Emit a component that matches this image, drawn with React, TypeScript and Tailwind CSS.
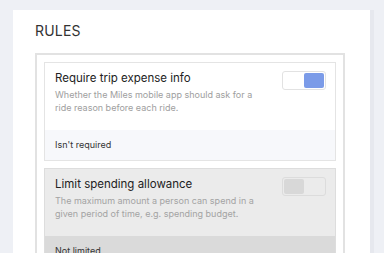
export default function App() {
  return (
    <div className="h-[253px] overflow-hidden bg-[#eef0f5] pl-[13px] pt-[10px] font-['Inter',sans-serif]">
      <div className="w-[357px] h-[300px] bg-white shadow-[4px_0_0_#e6e8ee] pl-[22px] pt-[12px]">
        <div className="text-[14px] leading-[18px] text-[#333] tracking-[0.2px]">RULES</div>
        <div className="mt-[13px] w-[310px] border-2 border-[#e2e2e2] p-[7px] flex flex-col gap-[7px]">
          <div className="border border-[#e4e4e4] bg-white">
            <div className="flex justify-between pl-[10px] pr-[9px] pt-[7px] pb-[16px]">
              <div>
                <div className="text-[11.5px] leading-[16px] text-[#222]">Require trip expense info</div>
                <div className="mt-[2px] w-[210px] text-[9px] leading-[13px] text-[#9e9e9e]">
                  Whether the Miles mobile app should ask for a ride reason before each ride.
                </div>
              </div>
              <div className="w-[44px] h-[19px] border border-[#e2e2e2] rounded-[3px] flex p-px mt-[1px]">
                <div className="flex-1" />
                <div className="flex-1 bg-[#7b9be8] rounded-[2px]" />
              </div>
            </div>
            <div className="bg-[#f7f8fb] h-[30px] pl-[10px] flex items-center text-[9px] text-[#333]">
              Isn&apos;t required
            </div>
          </div>
          <div className="border border-[#dddddd] bg-[#ebebeb]">
            <div className="flex justify-between pl-[10px] pr-[9px] pt-[7px] pb-[16px]">
              <div>
                <div className="text-[11.5px] leading-[16px] text-[#222]">Limit spending allowance</div>
                <div className="mt-[2px] w-[210px] text-[9px] leading-[13px] text-[#a3a3a3]">
                  The maximum amount a person can spend in a given period of time, e.g. spending budget.
                </div>
              </div>
              <div className="w-[44px] h-[19px] border border-[#dcdcdc] rounded-[3px] flex p-px mt-[1px]">
                <div className="flex-1 bg-[#d8d8d8] rounded-[2px]" />
                <div className="flex-1" />
              </div>
            </div>
            <div className="bg-[#dadada] h-[30px] pl-[10px] flex items-center text-[9px] text-[#333]">
              Not limited
            </div>
          </div>
        </div>
      </div>
    </div>
  );
}
